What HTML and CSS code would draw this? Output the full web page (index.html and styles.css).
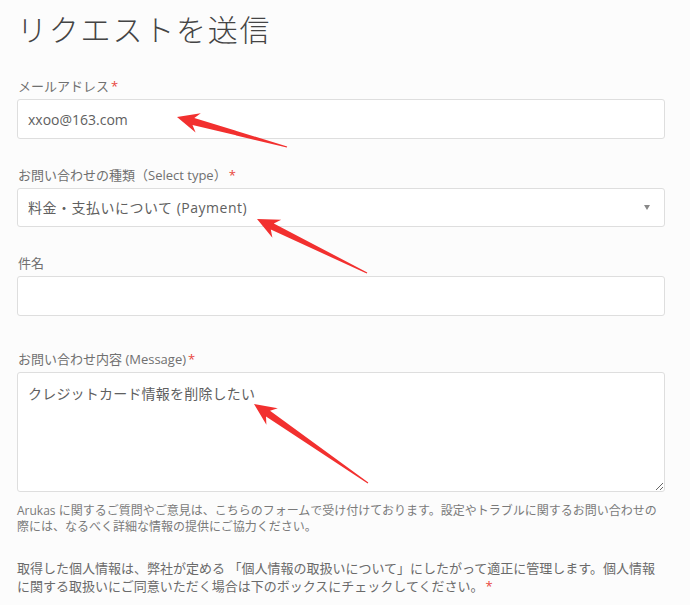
FILE: index.html
```html
<!DOCTYPE html>
<html lang="ja">
<head>
    <meta charset="UTF-8">
    <meta name="viewport" content="width=device-width, initial-scale=1.0">
    <title>リクエストを送信</title>
    <link rel="stylesheet" href="styles.css">
</head>
<body>
    <div class="page">
        <h1 class="title">リクエストを送信</h1>

        <form class="form">
            <div class="group">
                <label class="label">メールアドレス<span class="req">*</span></label>
                <input class="field" type="text" value="xxoo@163.com">
            </div>

            <div class="group">
                <label class="label">お問い合わせの種類（Select type）<span class="req">*</span></label>
                <div class="select-wrap">
                    <select class="field select">
                        <option>料金・支払いについて (Payment)</option>
                    </select>
                </div>
            </div>

            <div class="group">
                <label class="label">件名</label>
                <input class="field" type="text">
            </div>

            <div class="group group-msg">
                <label class="label">お問い合わせ内容 (Message)<span class="req">*</span></label>
                <textarea class="field area">クレジットカード情報を削除したい</textarea>
                <p class="help">Arukas に関するご質問やご意見は、こちらのフォームで受け付けております。設定やトラブルに関するお問い合わせの際には、なるべく詳細な情報の提供にご協力ください。</p>
            </div>

            <p class="note">取得した個人情報は、弊社が定める 「個人情報の取扱いについて」にしたがって適正に管理します。個人情報<br>に関する取扱いにご同意いただく場合は下のボックスにチェックしてください。<span class="req">*</span></p>
        </form>
    </div>

    <!-- 注釈の矢印 -->
    <svg class="arrows" width="690" height="605" viewBox="0 0 690 605">
        <polygon points="177,117 200.8,113.2 194.3,118.1 287.2,146.4 286.8,147.6 192.5,124.9 195.6,132.5"/>
        <polygon points="257,219 281.2,219.7 273.8,223.4 367.3,272.5 366.7,273.5 270.8,229.6 272.4,237.7"/>
        <polygon points="254,404 277.8,408.3 270,410.8 368.3,482.5 367.7,483.5 266,416.6 266.4,424.7"/>
    </svg>
</body>
</html>
```

FILE: styles.css
```css
body {
    margin: 0;
    background-color: #fcfcfc;
    font-family: "Open Sans", "Noto Sans CJK JP", sans-serif;
    color: #555;
    overflow: hidden;
}

.page {
    padding: 12px 25px 0 17px;
}

.title {
    margin: 0;
    font-size: 30px;
    line-height: 36px;
    font-weight: 300;
    letter-spacing: 1.8px;
    color: #444;
}

.form {
    margin-top: 29px;
}

.group {
    margin-bottom: 27px;
}

.group-msg {
    margin-top: 34px;
    margin-bottom: 0;
}

.label {
    display: block;
    font-size: 13px;
    line-height: 18px;
    color: #707070;
    margin-bottom: 4px;
    padding-left: 1px;
}

.req {
    display: inline-block;
    line-height: 13px;
    color: #e8473d;
    margin-left: 2px;
}

.field {
    display: block;
    box-sizing: border-box;
    width: 100%;
    height: 40px;
    padding: 0 10px;
    border: 1px solid #dedede;
    border-radius: 3px;
    background: #fff;
    font-family: "Open Sans", "Noto Sans CJK JP", sans-serif;
    font-size: 14px;
    color: #606060;
    outline: none;
}

.select-wrap {
    position: relative;
}

.select {
    appearance: none;
    -webkit-appearance: none;
    height: 39px;
    letter-spacing: 0.5px;
}

/* 小さな下向き三角 */
.select-wrap::after {
    content: "";
    position: absolute;
    right: 15px;
    top: 17px;
    border-left: 3px solid transparent;
    border-right: 3px solid transparent;
    border-top: 5px solid #888;
}

.area {
    height: 120px;
    padding: 11px 10px;
    line-height: 20px;
    letter-spacing: 0.2px;
    resize: vertical;
}

.help {
    margin: 11px 0 0;
    font-size: 12px;
    line-height: 16px;
    color: #7a7a7a;
}

.note {
    margin: 24px 0 0;
    font-size: 13px;
    line-height: 18px;
    color: #6a6a6a;
}

.arrows {
    position: absolute;
    top: 0;
    left: 0;
    pointer-events: none;
}

.arrows polygon {
    fill: #f2302f;
}
```
